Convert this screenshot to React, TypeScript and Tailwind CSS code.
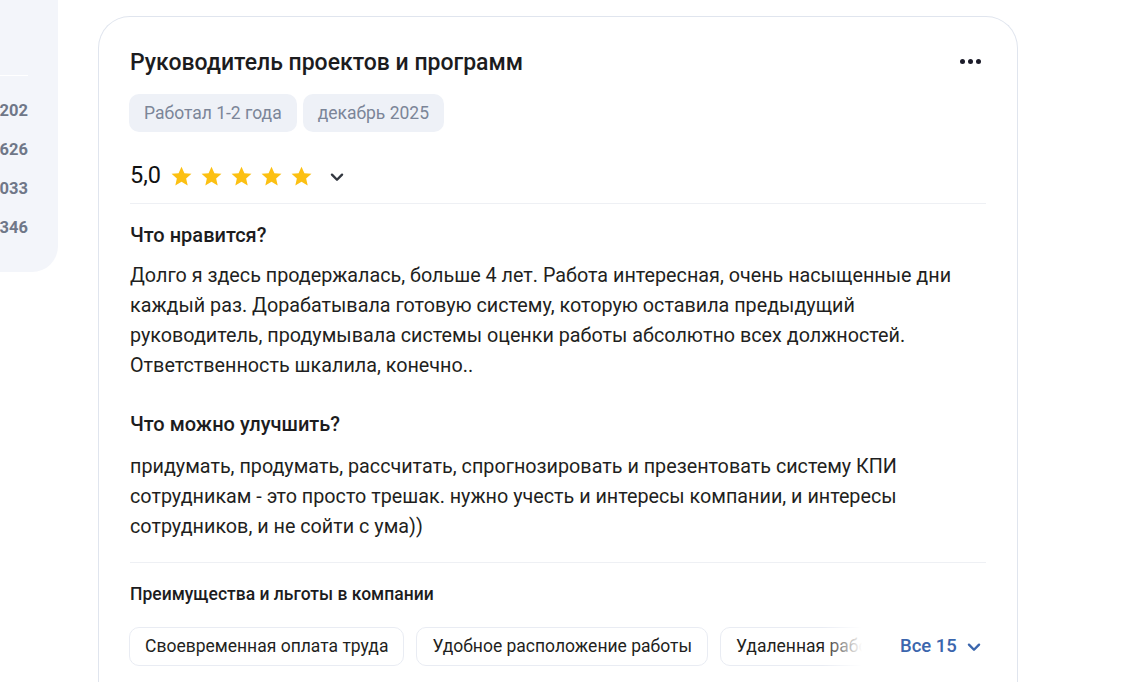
const likes =
  "Долго я здесь продержалась, больше 4 лет. Работа интересная, очень насыщенные дни каждый раз. Дорабатывала готовую систему, которую оставила предыдущий руководитель, продумывала системы оценки работы абсолютно всех должностей. Ответственность шкалила, конечно..";

const improve =
  "придумать, продумать, рассчитать, спрогнозировать и презентовать систему КПИ сотрудникам - это просто трешак. нужно учесть и интересы компании, и интересы сотрудников, и не сойти с ума))";

const perks = ["Своевременная оплата труда", "Удобное расположение работы", "Удаленная работа"];

const stats = ["202", "626", "033", "346"];

function Star() {
  return (
    <svg viewBox="0 0 24 24" className="h-[25px] w-[25px]" fill="#fcc012">
      <path d="M12 2.6l2.8 6.2 6.75.62-5.1 4.48 1.5 6.62L12 17.1l-5.95 3.42 1.5-6.62-5.1-4.48 6.75-.62L12 2.6z" />
    </svg>
  );
}

function Chevron({ color }: { color: string }) {
  return (
    <svg viewBox="0 0 24 24" className="h-[22px] w-[22px]" fill="none" stroke={color} strokeWidth="2.6" strokeLinecap="round" strokeLinejoin="round">
      <path d="M6.5 9.5l5.5 5.5 5.5-5.5" />
    </svg>
  );
}

export default function App() {
  return (
    <main className="flex h-[682px] w-[1131px] overflow-hidden bg-white font-['Roboto',sans-serif] text-[#1c1c1e]">
      <aside className="h-[272px] w-[58px] shrink-0 rounded-br-[26px] bg-[#f3f5fa]">
        <div className="mt-[75px] mr-[30px] border-t border-white" />
        <div className="mt-[24px] flex flex-col items-end gap-[17px] pr-[30px] text-[16.5px] font-bold leading-[22px] text-[#6f7788]">
          {stats.map((s) => (
            <span key={s}>{s}</span>
          ))}
        </div>
      </aside>

      <section className="ml-[40px] mt-[16px] w-[920px] shrink-0 rounded-t-[32px] border border-b-0 border-[#e0e5ee] px-[31px] pt-[31px]">
        <div className="flex items-center justify-between">
          <h1 className="text-[23px] font-medium leading-[30px] text-[#1c1c1e]">Руководитель проектов и программ</h1>
          <div className="mr-[5px] -mt-[4px] flex gap-[3px]">
            <span className="h-[5px] w-[5px] rounded-full bg-[#1c1c2a]" />
            <span className="h-[5px] w-[5px] rounded-full bg-[#1c1c2a]" />
            <span className="h-[5px] w-[5px] rounded-full bg-[#1c1c2a]" />
          </div>
        </div>

        <div className="-ml-[1px] mt-[16px] flex gap-[6px]">
          {["Работал 1-2 года", "декабрь 2025"].map((t) => (
            <span key={t} className="flex h-[38px] items-center rounded-[10px] bg-[#eef1f7] px-[15px] text-[17.5px] text-[#7b8598]">
              {t}
            </span>
          ))}
        </div>

        <div className="mt-[24px] flex h-[40px] items-center">
          <span className="mr-[8px] text-[23.5px] leading-none text-[#111]">5,0</span>
          <div className="flex gap-[5px]">
            <Star />
            <Star />
            <Star />
            <Star />
            <Star />
          </div>
          <span className="ml-[12px] mt-[2px]">
            <Chevron color="#333840" />
          </span>
        </div>

        <div className="mt-[7px] border-t border-[#eef0f4]" />

        <h2 className="mt-[18px] text-[20px] font-medium leading-[26px]">Что нравится?</h2>
        <p className="mt-[13px] text-[19.75px] leading-[30px] text-[#1f1f21]">{likes}</p>

        <h2 className="mt-[30px] text-[20px] font-medium leading-[26px]">Что можно улучшить?</h2>
        <p className="mt-[15px] pr-[40px] text-[19.75px] leading-[30px] text-[#1f1f21]">{improve}</p>

        <div className="mt-[20px] border-t border-[#eef0f4]" />

        <h3 className="mt-[20px] text-[17.5px] font-medium leading-[22px]">Преимущества и льготы в компании</h3>

        <div className="-ml-[1px] mt-[22px] flex items-center">
          <div className="relative flex w-[733px] gap-[12px] overflow-hidden">
            {perks.map((p) => (
              <span key={p} className="flex h-[39px] shrink-0 items-center rounded-[10px] border border-[#e9ecf3] bg-white px-[15px] text-[17.5px] text-[#1f1f21]">
                {p}
              </span>
            ))}
            <div className="absolute right-0 top-0 h-full w-[40px] bg-gradient-to-r from-white/0 to-white" />
          </div>
          <button className="ml-[38px] flex items-center gap-[6px] text-[18.5px] font-medium text-[#3b66ad]">
            Все 15
            <Chevron color="#3b66ad" />
          </button>
        </div>
      </section>
    </main>
  );
}
